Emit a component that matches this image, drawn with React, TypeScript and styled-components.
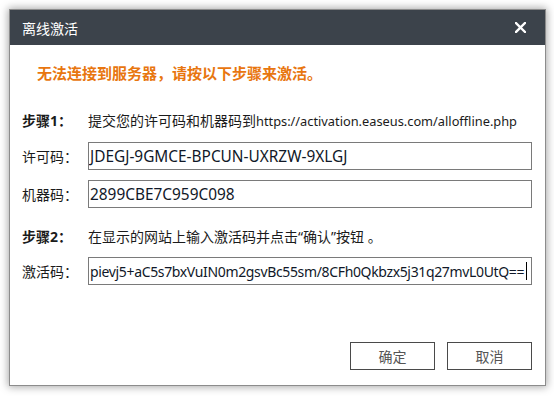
import { createGlobalStyle, styled } from 'styled-components';

const GlobalStyle = createGlobalStyle`
  html, body {
    margin: 0;
    padding: 0;
    background: #ffffff;
  }
  body {
    font-family: 'Noto Sans', 'Noto Sans CJK SC', sans-serif;
    font-size: 14px;
    color: #1b1b1b;
  }
`;

const CloseIcon = () => (
  <svg width="11" height="11" viewBox="0 0 11 11">
    <path
      d="M1 1 L10 10 M10 1 L1 10"
      stroke="#ffffff"
      strokeWidth="2.4"
      strokeLinecap="square"
    />
  </svg>
);

const App = () => {
  return (
    <>
      <GlobalStyle />
      <MyPage>
        <MyDialog>
          <MyTitleBar>
            <span>离线激活</span>
            <MyCloseBtn>
              <CloseIcon />
            </MyCloseBtn>
          </MyTitleBar>
          <MyBody>
            <MyWarning>无法连接到服务器，请按以下步骤来激活。</MyWarning>
            <MyStep $top={28}>
              <MyStepLabel>步骤1：</MyStepLabel>
              <span>
                提交您的许可码和机器码到
                <MyLink>https://activation.easeus.com/alloffline.php</MyLink>
              </span>
            </MyStep>
            <MyField $top={11}>
              <MyLabel>许可码：</MyLabel>
              <MyInput>JDEGJ-9GMCE-BPCUN-UXRZW-9XLGJ</MyInput>
            </MyField>
            <MyField $top={10}>
              <MyLabel>机器码：</MyLabel>
              <MyInput>2899CBE7C959C098</MyInput>
            </MyField>
            <MyStep $top={19}>
              <MyStepLabel>步骤2：</MyStepLabel>
              <span>在显示的网站上输入激活码并点击“确认”按钮 。</span>
            </MyStep>
            <MyField $top={10}>
              <MyLabel>激活码：</MyLabel>
              <MyInput $tight>
                pievj5+aC5s7bxVuIN0m2gsvBc55sm/8CFh0Qkbzx5j31q27mvL0UtQ==
                <MyCaret />
              </MyInput>
            </MyField>
            <MyFooter>
              <MyButton>确定</MyButton>
              <MyButton>取消</MyButton>
            </MyFooter>
          </MyBody>
        </MyDialog>
      </MyPage>
    </>
  );
};

const MyPage = styled.div`
  padding: 9px;
  width: 554px;
  height: 396px;
  box-sizing: border-box;
`;

const MyDialog = styled.div`
  width: 537px;
  height: 377px;
  box-sizing: border-box;
  border: 1px solid #8c8c8c;
  background: #ffffff;
  box-shadow: 0 0 8px 1px rgba(0, 0, 0, 0.35);
  display: flex;
  flex-direction: column;
`;

const MyTitleBar = styled.div`
  height: 35px;
  flex-shrink: 0;
  background: #3c434b;
  color: #ffffff;
  display: flex;
  align-items: center;
  justify-content: space-between;
  padding: 0 19px 0 12px;
  font-size: 14px;
`;

const MyCloseBtn = styled.button`
  border: none;
  background: none;
  padding: 0;
  display: flex;
  cursor: pointer;
`;

const MyBody = styled.div`
  display: flex;
  flex-direction: column;
  padding: 0 13px 0 12px;
`;

const MyWarning = styled.div`
  margin: 18px 0 0 15px;
  height: 20px;
  line-height: 20px;
  font-size: 15px;
  font-weight: 700;
  color: #e8760f;
`;

const MyStep = styled.div<{ $top: number }>`
  margin-top: ${({ $top }) => $top}px;
  height: 20px;
  line-height: 20px;
  display: flex;
  font-size: 14px;
  color: #1b1b1b;
  white-space: nowrap;
`;

const MyStepLabel = styled.span`
  width: 66px;
  flex-shrink: 0;
  font-weight: 700;
`;

const MyLink = styled.span`
  font-size: 12.8px;
`;

const MyField = styled.div<{ $top: number }>`
  margin-top: ${({ $top }) => $top}px;
  display: flex;
  align-items: center;
`;

const MyLabel = styled.span`
  width: 66px;
  flex-shrink: 0;
  font-size: 14px;
`;

const MyInput = styled.div<{ $tight?: boolean }>`
  flex: 1;
  min-width: 0;
  height: 28px;
  box-sizing: border-box;
  border: 1px solid #7a7a7a;
  padding: 0 2px 0 1px;
  display: flex;
  align-items: center;
  font-size: ${({ $tight }) => ($tight ? '14px' : '15.4px')};
  letter-spacing: ${({ $tight }) => ($tight ? '-0.35px' : '0')};
  color: #101828;
  white-space: nowrap;
  overflow: hidden;
`;

const MyCaret = styled.span`
  width: 1px;
  height: 18px;
  background: #000000;
  margin-left: 2px;
  flex-shrink: 0;
`;

const MyFooter = styled.div`
  margin-top: 57px;
  display: flex;
  justify-content: flex-end;
  gap: 12px;
`;

const MyButton = styled.button`
  width: 85px;
  height: 28px;
  box-sizing: border-box;
  border: 1px solid #4a4a4a;
  background: #ffffff;
  color: #555555;
  font-family: 'Noto Sans CJK SC', sans-serif;
  font-size: 14px;
  padding: 0;
  cursor: pointer;
`;

export default App;
